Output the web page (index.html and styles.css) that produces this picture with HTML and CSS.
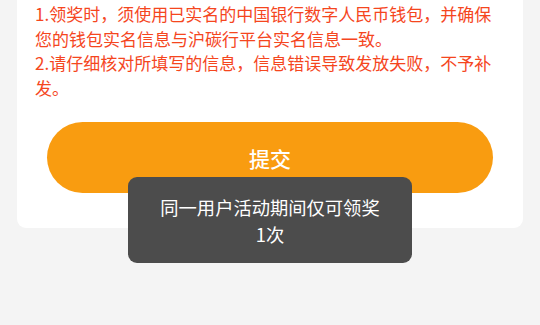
FILE: index.html
```html
<!DOCTYPE html>
<html lang="zh-CN">
<head>
<meta charset="utf-8">
<link rel="stylesheet" href="styles.css">
</head>
<body>
<div class="page">
  <div class="card">
    <div class="notes">
      <p>1.领奖时，须使用已实名的中国银行数字人民币钱包，并确保您的钱包实名信息与沪碳行平台实名信息一致。</p>
      <p>2.请仔细核对所填写的信息，信息错误导致发放失败，不予补发。</p>
    </div>
    <button class="submit">提交</button>
  </div>
</div>
<div class="toast">同一用户活动期间仅可领奖1次</div>
</body>
</html>
```
FILE: styles.css
```css
html, body {
  margin: 0;
  padding: 0;
  background: #f4f4f4;
  font-family: "Noto Sans CJK SC", "Noto Sans", sans-serif;
}
.page {
  width: 540px;
  height: 325px;
  overflow: hidden;
  padding: 0 17px;
  box-sizing: border-box;
}
.card {
  background: #fff;
  border-radius: 0 0 9px 9px;
  padding: 2px 18px 35px;
  display: flex;
  flex-direction: column;
}
.notes p {
  margin: 0;
  color: #f5461e;
  font-size: 17px;
  line-height: 24.5px;
}
.submit {
  margin: 22px 12px 0;
  height: 71px;
  border: none;
  border-radius: 36px;
  background: #f99c10;
  color: #fff;
  font-family: inherit;
  font-size: 21px;
  font-weight: 500;
}
.toast {
  position: absolute;
  left: 128px;
  top: 177px;
  width: 284px;
  box-sizing: border-box;
  padding: 17px 30px 15px;
  background: #4c4c4c;
  border-radius: 9px;
  color: #fff;
  font-size: 18.3px;
  line-height: 27px;
  text-align: center;
}
```
